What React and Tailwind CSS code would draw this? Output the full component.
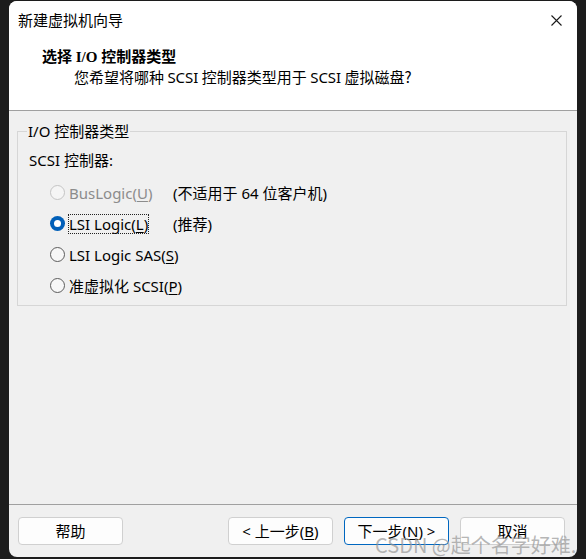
import React from "react";

const UI = { fontFamily: '"Noto Sans", "Noto Sans CJK SC", sans-serif' };
const CJK = { fontFamily: '"Noto Sans CJK SC", "Noto Sans", sans-serif' };

function Radio({ state }) {
  if (state === "checked") {
    return (
      <span className="flex h-[15px] w-[15px] shrink-0 items-center justify-center rounded-full bg-[#005fb8]">
        <span className="block h-[7px] w-[7px] rounded-full bg-white" />
      </span>
    );
  }
  if (state === "disabled") {
    return <span className="block h-[15px] w-[15px] shrink-0 rounded-full border border-[#c4c4c4] bg-[#f5f5f5]" />;
  }
  return <span className="block h-[15px] w-[15px] shrink-0 rounded-full border border-[#5c5c5c] bg-[#f7f7f7]" />;
}

function Row({ state, children, note, focus }) {
  return (
    <div className="flex h-[31px] items-center">
      <div className="ml-[21px] shrink-0">
        <Radio state={state} />
      </div>
      <div className="ml-[4px] w-[104px] shrink-0">
        <span
          className={
            "inline-block whitespace-nowrap leading-[18px] " +
            (focus ? "outline outline-1 outline-dotted outline-[#222] outline-offset-0 " : "") +
            (state === "disabled" ? "text-[#8c8c8c]" : "text-black")
          }
        >
          {children}
        </span>
      </div>
      {note && <span className="whitespace-nowrap text-black">{note}</span>}
    </div>
  );
}

function Btn({ children, primary }) {
  return (
    <button
      className={
        "h-[28px] w-[105px] rounded-[4px] bg-[#fdfdfd] text-[15px] text-black " +
        (primary ? "border border-[#0067c0]" : "border border-[#d0d0d0]")
      }
      style={UI}
    >
      {children}
    </button>
  );
}

export default function App() {
  return (
    <div className="relative h-[559px] w-[586px] overflow-hidden bg-[#1c1c1c] pt-[1px] pl-[9px]" style={UI}>
      <div className="flex h-[556px] w-[568px] flex-col overflow-hidden rounded-[8px] bg-[#f0f0f0] text-[15px] leading-[20px]">
        {/* title bar */}
        <div className="flex h-[38px] shrink-0 items-center justify-between bg-white pl-[9px] pr-[15px]">
          <span style={CJK} className="text-[15px] text-black">新建虚拟机向导</span>
          <svg width="11" height="11" viewBox="0 0 11 11" className="mt-[1px]">
            <path d="M0.5 0.5 L10.5 10.5 M10.5 0.5 L0.5 10.5" stroke="#1a1a1a" strokeWidth="1.1" />
          </svg>
        </div>
        {/* header */}
        <div className="flex h-[71px] shrink-0 flex-col bg-white pt-[8px]">
          <div
            className="pl-[33px] text-[15px] font-bold text-black"
            style={{ fontFamily: '"Liberation Serif", "Noto Sans CJK SC", serif' }}
          >
            选择 I/O 控制器类型
          </div>
          <div className="pl-[65px] text-[15px] text-black" style={CJK}>
            您希望将哪种 <span style={UI}>SCSI</span> 控制器类型用于 <span style={UI}>SCSI</span> 虚拟磁盘?
          </div>
        </div>
        <div className="h-px shrink-0 bg-[#a0a0a0]" />
        {/* body */}
        <div className="flex h-[393px] shrink-0 flex-col pt-[10px]">
          <fieldset className="ml-[8px] mr-[10px] border border-[#d6d6d6] pb-[4px] pl-[11px]">
            <legend className="ml-[-2px] px-[1px] leading-[20px] text-black">I/O 控制器类型</legend>
            <div className="mt-[9px] text-black">SCSI 控制器:</div>
            <div className="mt-[7px] flex flex-col">
              <Row state="disabled" note="(不适用于 64 位客户机)">
                BusLogic(<span className="underline underline-offset-2">U</span>)
              </Row>
              <Row state="checked" note="(推荐)" focus>
                LSI Logic(<span className="underline underline-offset-2">L</span>)
              </Row>
              <Row state="unchecked">
                LSI Logic SAS(<span className="underline underline-offset-2">S</span>)
              </Row>
              <Row state="unchecked">
                准虚拟化 SCSI(<span className="underline underline-offset-2">P</span>)
              </Row>
            </div>
          </fieldset>
        </div>
        <div className="h-px shrink-0 bg-[#a0a0a0]" />
        {/* footer */}
        <div className="flex flex-1 items-start pl-[9px] pr-[12px] pt-[12px]">
          <Btn>帮助</Btn>
          <div className="ml-auto flex gap-[11px]">
            <Btn>
              &lt; 上一步(<span className="underline underline-offset-2">B</span>)
            </Btn>
            <Btn primary>
              下一步(<span className="underline underline-offset-2">N</span>) &gt;
            </Btn>
            <Btn>取消</Btn>
          </div>
        </div>
      </div>
      <div
        className="pointer-events-none absolute left-[375px] top-[532px] whitespace-nowrap text-[20px] leading-[26px] text-[rgba(150,150,150,0.7)]"
        style={CJK}
      >
        CSDN @起个名字好难.
      </div>
    </div>
  );
}
